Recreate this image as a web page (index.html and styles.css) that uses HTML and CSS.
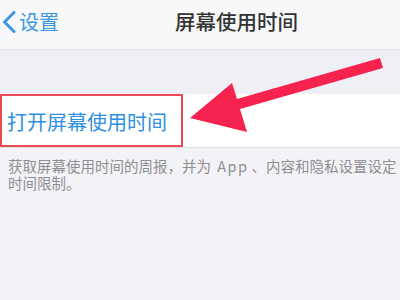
FILE: index.html
```html
<!DOCTYPE html>
<html lang="zh">
<head>
<meta charset="utf-8">
<link rel="stylesheet" href="styles.css">
</head>
<body>
<div class="page">
  <header class="nav">
    <div class="back">
      <svg class="chev" width="14" height="22" viewBox="0 0 14 22"><path d="M12 1.5 L2.5 11 L12 20.5" fill="none" stroke="#3b97e6" stroke-width="3" stroke-linecap="round" stroke-linejoin="round"/></svg>
      <span class="back-label">设置</span>
    </div>
    <div class="title">屏幕使用时间</div>
  </header>
  <div class="band"></div>
  <div class="cell">
    <span class="cell-label">打开屏幕使用时间</span>
    <div class="mark"></div>
  </div>
  <p class="footer">获取屏幕使用时间的周报，并为 <span class="latin">App</span>、内容和隐私设置设定<br>时间限制。</p>
  <svg class="arrow" width="400" height="300" viewBox="0 0 400 300"><polygon points="190,118 232,83 237,99 380,58 383,68 240,109 247,132" fill="#f7234f"/></svg>
</div>
</body>
</html>
```
FILE: styles.css
```css
html, body {
  margin: 0;
  padding: 0;
  width: 400px;
  height: 300px;
  overflow: hidden;
  background: #f3f2f7;
  font-family: "Noto Sans CJK SC", "Noto Sans", sans-serif;
}
.page {
  position: relative;
  width: 400px;
  height: 300px;
}
.nav {
  height: 50px;
  background: #f8f8fa;
  border-bottom: 1px solid #e3e2e8;
  display: flex;
  align-items: center;
  box-sizing: border-box;
  padding-left: 2px;
}
.back {
  display: flex;
  align-items: center;
  gap: 3px;
  height: 100%;
  padding-bottom: 6px;
  box-sizing: border-box;
}
.back-label {
  font-size: 20px;
  color: #3b97e6;
  line-height: 1;
}
.title {
  margin-left: 116px;
  font-size: 20.5px;
  color: #333;
  line-height: 1;
  padding-bottom: 6px;
  font-weight: 500;
}
.band {
  height: 44px;
  background: #f0eff5;
}
.cell {
  position: relative;
  height: 53px;
  background: #fff;
  border-bottom: 1px solid #e0dfe5;
  display: flex;
  align-items: center;
  padding-left: 7px;
}
.cell-label {
  font-size: 20px;
  color: #2f8fe0;
  line-height: 1;
  padding-top: 2px;
}
.mark {
  position: absolute;
  left: 0;
  top: 0;
  width: 183px;
  height: 53px;
  border: 2px solid #ea4a55;
  box-sizing: border-box;
}
.footer {
  margin: 9px 0 0 8px;
  font-size: 14.5px;
  line-height: 17px;
  color: #8e8e93;
  white-space: nowrap;
}
.latin {
  letter-spacing: 1.5px;
  margin: 0 3px;
}
.arrow {
  position: absolute;
  left: 0;
  top: 0;
}
```
